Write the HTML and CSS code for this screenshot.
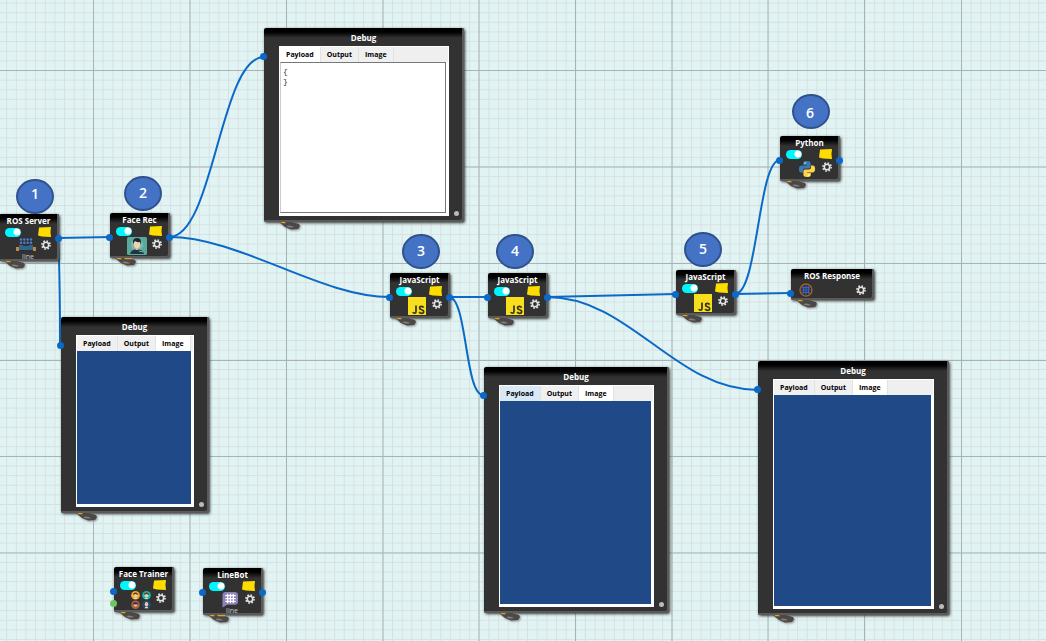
FILE: index.html
```html
<!DOCTYPE html>
<html lang="en">
<head>
<meta charset="utf-8">
<title>Flow editor</title>
<link rel="stylesheet" href="styles.css">
</head>
<body>
<svg class="defs" aria-hidden="true">
  <defs>
    <pattern id="minor" width="9.645" height="9.645" x="93" y="70" patternUnits="userSpaceOnUse">
      <path d="M0 .5H9.645M.5 0V9.645" stroke="#dcdfe2" stroke-width="1" fill="none"/>
    </pattern>
    <symbol id="gear" viewBox="0 0 10 10">
      <circle cx="5" cy="5" r="2.7" fill="none" stroke="#e4e4e4" stroke-width="1.6"/>
      <circle cx="5" cy="5" r="4.1" fill="none" stroke="#e4e4e4" stroke-width="1.6" stroke-dasharray="1.6 1.62"/>
    </symbol>
    <symbol id="foot" viewBox="0 0 22 8" preserveAspectRatio="none">
      <path d="M0 0H13L20 2L21 4L19 7L12 7.500L6 5Z" fill="#4b4846"/>
      <path d="M7 4Q11 2.500 15 5Q11 6.500 7 4Z" fill="#85817d"/>
      <path d="M1 0H6L7 1.300H3Z" fill="#e0a020"/>
    </symbol>
    <symbol id="foot-wide" viewBox="0 0 22 8" preserveAspectRatio="none">
      <path d="M0 0H13L20 2L21 4L19 7L12 7.500L6 5Z" fill="#4b4846"/>
      <path d="M7 4Q11 2.500 15 5Q11 6.500 7 4Z" fill="#85817d"/>
      <path d="M1 0H6L7 1.300H3ZM9 0H17V1.300H10Z" fill="#e0a020"/>
    </symbol>
    <symbol id="js" viewBox="0 0 18 18">
      <rect width="18" height="18" fill="#f7df1e"/>
      <path d="M8 8.500V14.500Q8 16.200 6.500 16.200Q5.300 16.200 4.900 15" fill="none" stroke="#35331c" stroke-width="1.700"/>
      <path d="M15.600 10.600Q15 9.300 13.400 9.300Q11.600 9.300 11.600 10.900Q11.600 12.200 13.600 12.700Q15.700 13.200 15.700 14.600Q15.700 16.300 13.700 16.300Q11.800 16.300 11.200 14.900" fill="none" stroke="#35331c" stroke-width="1.700"/>
    </symbol>
    <symbol id="server" viewBox="0 0 20 14">
      <g fill="#4c7ddb">
        <circle cx="5" cy="1.500" r="1.200"/><circle cx="8.300" cy="1.500" r="1.200"/><circle cx="11.600" cy="1.500" r="1.200"/><circle cx="15" cy="1.500" r="1.200"/>
        <circle cx="5" cy="4.800" r="1.200"/><circle cx="8.300" cy="4.800" r="1.200"/><circle cx="11.600" cy="4.800" r="1.200"/><circle cx="15" cy="4.800" r="1.200"/>
      </g>
      <path d="M3 7H7V8H13V7H17V12H3Z" fill="#2f6590"/>
      <path d="M0 9H3V13H0ZM17 9H20V13H17Z" fill="#c88439"/>
      <path d="M3 12H17V13H3Z" fill="#26303a"/>
    </symbol>
    <symbol id="face" viewBox="0 0 20 18">
      <rect width="20" height="18" rx="1.500" fill="#59aa9b"/>
      <circle cx="10" cy="8" r="6" fill="#76bdb0"/>
      <path d="M3 17Q4 12.500 10 12Q16 12.500 17 17Z" fill="#1e3448"/>
      <rect x="8.500" y="9" width="3" height="4" fill="#e3b88e"/>
      <ellipse cx="10" cy="7" rx="3.300" ry="4.200" fill="#f3d3ae"/>
      <path d="M6 8V4Q6.500 1 10 1Q14 1 14 5V8L13 5Q9 5.500 8 4L6.500 6Z" fill="#1b2733"/>
      <path d="M12 14L16 15" stroke="#79bdb2"/>
    </symbol>
    <symbol id="python" viewBox="0 0 20 20">
      <path d="M9.800 1C5.500 1 5.800 2.800 5.800 3.500V5.500H10V6.200H4Q1 6.200 1 10.200T4 14H5.500V11.800Q5.500 9.500 8 9.500H12Q14 9.500 14 7.500V3.500Q14 1 9.800 1Z" fill="#3b79b0"/>
      <path d="M10.200 19C14.500 19 14.200 17.200 14.200 16.500V14.500H10V13.800H16Q19 13.800 19 9.800T16 6H14.500V8.200Q14.500 10.500 12 10.500H8Q6 10.500 6 12.500V16.500Q6 19 10.200 19Z" fill="#ffd445"/>
      <circle cx="7.900" cy="3.400" r=".8" fill="#fff"/><circle cx="12.100" cy="16.600" r=".8" fill="#fff"/>
    </symbol>
    <symbol id="people" viewBox="0 0 20 18">
      <circle cx="4.500" cy="4.300" r="4.300" fill="#f5ad25"/>
      <circle cx="15.500" cy="4.300" r="4.300" fill="#18b9ad"/>
      <circle cx="4.500" cy="13.700" r="4.300" fill="#a4693e"/>
      <circle cx="15.500" cy="13.700" r="4.300" fill="#234b6b"/>
      <g fill="#f3c9a0">
        <ellipse cx="4.500" cy="4.300" rx="2" ry="2.200"/><ellipse cx="15.500" cy="4.300" rx="2" ry="2.200"/>
        <ellipse cx="4.500" cy="13.700" rx="2" ry="1.800"/><ellipse cx="15.500" cy="13.300" rx="1.700" ry="2.200"/>
      </g>
      <path d="M2 4Q2 1.500 4.500 1.500T7 4L4.500 3ZM13 4Q13 1.500 15.500 1.500T18 4L15.500 3Z" fill="#5b3725"/>
      <path d="M1.500 13.500Q2 11 4.500 11T7.500 13.500Z" fill="#5a2451"/>
      <path d="M2.500 7.700Q4.500 6 6.500 7.700ZM13.500 7.700Q15.500 6 17.500 7.700ZM13.500 17.200Q15.500 14.500 17.500 17.200Z" fill="#f6e9dc"/>
    </symbol>
    <symbol id="bot" viewBox="0 0 18 18">
      <path d="M4 1H14Q17.500 1 17.500 4.500V11Q17.500 14.500 14 14.500H6L1 17.500V5Q1 1 4 1Z" fill="#8f7fba"/>
      <path d="M6.500 3V13M9.500 3V13M12.500 3V13M4 5H15M4 8H15M4 11H15" stroke="#fff" stroke-width="1.300"/>
    </symbol>
    <symbol id="globe" viewBox="0 0 14 14">
      <circle cx="7" cy="7" r="6" fill="#2a2c33" stroke="#a95f28" stroke-width="1.400"/>
      <path d="M4.500 3V11M7 2.500V11.500M9.500 3V11M3 4.700H11M2.500 7H11.500M3 9.300H11" stroke="#3564b6" stroke-width="1.200"/>
    </symbol>
  </defs>
</svg>

<main class="canvas">
  <svg class="wires" aria-hidden="true">
    <rect width="100%" height="100%" fill="url(#minor)"/>
    <path class="major" d="M93.500 0V2000M190 0V2000M286.500 0V2000M383 0V2000M479 0V2000M575.500 0V2000M672 0V2000M768 0V2000M864.500 0V2000M961.500 0V2000M0 70.500H4000M0 167H4000M0 263.500H4000M0 360.500H4000M0 456.500H4000M0 553H4000"/>
    <g class="wire">
      <path d="M58 238L110 237"/>
      <path d="M58 238C60 270 60 310 60 346"/>
      <path d="M169 237C214 237 220 57 264 57"/>
      <path d="M169 237C240 237 320 297 390 297"/>
      <path d="M449 297H489"/>
      <path d="M449 297C467 297 465 395 483 395"/>
      <path d="M547 297L676 294"/>
      <path d="M547 297C630 297 675 390 758 390"/>
      <path d="M735 294C758 294 758 160 780 160"/>
      <path d="M735 294L791 293"/>
    </g>
  </svg>

  <section class="node ros-server">
    <h2 class="title">ROS Server</h2>
    <div class="row"><input class="toggle" type="checkbox" checked aria-label="Enable ROS Server"><span class="note"></span></div>
    <div class="row tools"><svg class="icon server"><use href="#server"/></svg><button class="gear" aria-label="Settings"><svg><use href="#gear"/></svg></button></div>
    <p class="caption">line</p>
    <i class="port out"></i><svg class="foot"><use href="#foot"/></svg>
  </section>

  <section class="node face-rec">
    <h2 class="title">Face Rec</h2>
    <div class="row"><input class="toggle" type="checkbox" checked aria-label="Enable Face Rec"><span class="note"></span></div>
    <div class="row tools"><svg class="icon"><use href="#face"/></svg><button class="gear" aria-label="Settings"><svg><use href="#gear"/></svg></button></div>
    <i class="port in"></i><i class="port out"></i><svg class="foot"><use href="#foot-wide"/></svg>
  </section>

  <section class="node js-a">
    <h2 class="title">JavaScript</h2>
    <div class="row"><input class="toggle" type="checkbox" checked aria-label="Enable JavaScript"><span class="note"></span></div>
    <div class="row tools"><svg class="icon"><use href="#js"/></svg><button class="gear" aria-label="Settings"><svg><use href="#gear"/></svg></button></div>
    <i class="port in"></i><i class="port out"></i><svg class="foot"><use href="#foot"/></svg>
  </section>

  <section class="node js-b">
    <h2 class="title">JavaScript</h2>
    <div class="row"><input class="toggle" type="checkbox" checked aria-label="Enable JavaScript"><span class="note"></span></div>
    <div class="row tools"><svg class="icon"><use href="#js"/></svg><button class="gear" aria-label="Settings"><svg><use href="#gear"/></svg></button></div>
    <i class="port in"></i><i class="port out"></i><svg class="foot"><use href="#foot"/></svg>
  </section>

  <section class="node js-c">
    <h2 class="title">JavaScript</h2>
    <div class="row"><input class="toggle" type="checkbox" checked aria-label="Enable JavaScript"><span class="note"></span></div>
    <div class="row tools"><svg class="icon"><use href="#js"/></svg><button class="gear" aria-label="Settings"><svg><use href="#gear"/></svg></button></div>
    <i class="port in"></i><i class="port out"></i><svg class="foot"><use href="#foot"/></svg>
  </section>

  <section class="node python">
    <h2 class="title">Python</h2>
    <div class="row"><input class="toggle" type="checkbox" checked aria-label="Enable Python"><span class="note"></span></div>
    <div class="row tools"><svg class="icon"><use href="#python"/></svg><button class="gear" aria-label="Settings"><svg><use href="#gear"/></svg></button></div>
    <i class="port in"></i><i class="port out"></i><svg class="foot"><use href="#foot"/></svg>
  </section>

  <section class="node face-trainer">
    <h2 class="title">Face Trainer</h2>
    <div class="row"><input class="toggle" type="checkbox" checked aria-label="Enable Face Trainer"><span class="note"></span></div>
    <div class="row tools"><svg class="icon"><use href="#people"/></svg><button class="gear" aria-label="Settings"><svg><use href="#gear"/></svg></button></div>
    <i class="port in"></i><i class="port in second"></i><svg class="foot"><use href="#foot"/></svg>
  </section>

  <section class="node linebot">
    <h2 class="title">LineBot</h2>
    <div class="row"><input class="toggle" type="checkbox" checked aria-label="Enable LineBot"><span class="note"></span></div>
    <div class="row tools"><svg class="icon bot"><use href="#bot"/></svg><button class="gear" aria-label="Settings"><svg><use href="#gear"/></svg></button></div>
    <p class="caption">line</p>
    <i class="port in"></i><i class="port out"></i><svg class="foot"><use href="#foot-wide"/></svg>
  </section>

  <section class="node response">
    <h2 class="title">ROS Response</h2>
    <div class="row"><svg class="globe"><use href="#globe"/></svg><button class="gear" aria-label="Settings"><svg><use href="#gear"/></svg></button></div>
    <i class="port in"></i><svg class="foot"><use href="#foot"/></svg>
  </section>

  <section class="node debug debug-a">
    <h2 class="title">Debug</h2>
    <div class="panel">
      <div class="tabs" role="tablist"><button class="tab active" role="tab">Payload</button><button class="tab" role="tab">Output</button><button class="tab" role="tab">Image</button></div>
      <textarea class="payload" aria-label="Payload">{
}</textarea>
    </div>
    <i class="port in"></i><i class="grip"></i><svg class="foot"><use href="#foot"/></svg>
  </section>

  <section class="node debug debug-b">
    <h2 class="title">Debug</h2>
    <div class="panel">
      <div class="tabs" role="tablist"><button class="tab" role="tab">Payload</button><button class="tab" role="tab">Output</button><button class="tab active" role="tab">Image</button></div>
      <div class="image"></div>
    </div>
    <i class="port in"></i><i class="grip"></i><svg class="foot"><use href="#foot"/></svg>
  </section>

  <section class="node debug debug-c">
    <h2 class="title">Debug</h2>
    <div class="panel">
      <div class="tabs" role="tablist"><button class="tab hover" role="tab">Payload</button><button class="tab" role="tab">Output</button><button class="tab active" role="tab">Image</button></div>
      <div class="image"></div>
    </div>
    <i class="port in"></i><i class="grip"></i><svg class="foot"><use href="#foot"/></svg>
  </section>

  <section class="node debug debug-d">
    <h2 class="title">Debug</h2>
    <div class="panel">
      <div class="tabs" role="tablist"><button class="tab" role="tab">Payload</button><button class="tab" role="tab">Output</button><button class="tab active" role="tab">Image</button></div>
      <div class="image"></div>
    </div>
    <i class="port in"></i><i class="grip"></i><svg class="foot"><use href="#foot"/></svg>
  </section>

  <span class="badge step-1">1</span>
  <span class="badge step-2">2</span>
  <span class="badge step-3">3</span>
  <span class="badge step-4">4</span>
  <span class="badge step-5">5</span>
  <span class="badge step-6">6</span>
</main>
</body>
</html>
```
FILE: styles.css
```css
* { box-sizing: border-box; }

body {
  margin: 0;
  font-family: "Open Sans", "Noto Sans", sans-serif;
}

.defs { position: absolute; width: 0; height: 0; }

.canvas {
  position: relative;
  min-height: 100vh;
  overflow: hidden;
  background: #dff4f3;
}

.wires { position: absolute; inset: 0; width: 100%; height: 100%; }
.major { stroke: #a9b3b5; stroke-width: 1; fill: none; }
.wire { stroke: #0b69c7; stroke-width: 2; fill: none; }

/* Nodes on the free canvas */
.node {
  position: absolute;
  display: flex;
  flex-direction: column;
  width: 60px;
  height: 45px;
  border-radius: 2px;
  background: linear-gradient(#000 0, #000 4px, #323232 10px);
  box-shadow: inset -2px -2px 0 #5a5a5a, 1px 1px 3px #333;
}
.ros-server { left: -1px; top: 214px; height: 47px; }
.face-rec { left: 110px; top: 213px; }
.js-a { left: 390px; top: 273px; }
.js-b { left: 488px; top: 273px; }
.js-c { left: 676px; top: 270px; }
.python { left: 780px; top: 136px; }
.face-trainer { left: 114px; top: 567px; }
.linebot { left: 203px; top: 568px; height: 47px; }
.response { left: 791px; top: 269px; width: 83px; height: 31px; }
.debug-a { left: 264px; top: 28px; width: 200px; height: 194px; }
.debug-b { left: 61px; top: 317px; width: 148px; height: 196px; }
.debug-c { left: 484px; top: 367px; width: 185px; height: 246px; }
.debug-d { left: 758px; top: 361px; width: 191px; height: 254px; }

.title {
  margin: 0;
  height: 13px;
  padding-right: 1px;
  color: #fff;
  font-size: 8px;
  line-height: 13px;
  font-weight: 700;
  text-align: center;
  white-space: nowrap;
}

.row {
  display: flex;
  justify-content: space-between;
  align-items: center;
  height: 10px;
  padding: 0 8px 0 6px;
}
.tools { height: 20px; justify-content: flex-end; align-items: flex-start; gap: 5px; }

.toggle {
  appearance: none;
  width: 16px;
  height: 9px;
  margin: 0;
  border-radius: 5px;
  background: radial-gradient(circle at 12px 4px, #fff 3px, #00f6ff 4px);
}

.note {
  width: 13px;
  height: 10px;
  background: #ffdc00;
  clip-path: polygon(8% 6%, 100% 0, 96% 50%, 100% 100%, 30% 94%, 0 85%);
}

.icon { width: 20px; height: 18px; margin-top: 1px; }
.server { height: 14px; }
.bot { height: 17px; margin-top: 0; }
.globe { width: 14px; height: 14px; margin-left: 2px; }

.gear {
  width: 10px;
  height: 10px;
  margin-top: 3px;
  padding: 0;
  border: 0;
  background: none;
}
.gear svg { display: block; width: 10px; height: 10px; }

.response .row { height: 16px; }
.response .gear { margin-top: 0; }

.caption {
  position: absolute;
  inset: auto 0 0;
  margin: 0;
  padding-right: 2px;
  color: #ccc;
  font-size: 7px;
  line-height: 8px;
  text-align: center;
}

.port {
  position: absolute;
  top: 21px;
  width: 7px;
  height: 7px;
  border-radius: 50%;
  background: #0b69c7;
}
.in { left: -4px; }
.out { right: -3px; }
.second { top: 33px; background: #6cc75f; }
.debug .port { top: 25px; }

.foot {
  position: absolute;
  top: 100%;
  left: 5px;
  width: 22px;
  height: 8px;
  filter: drop-shadow(1px 1px 1px #888);
}
.debug .foot { left: 15px; }

/* Debug windows */
.debug { padding-bottom: 6px; }
.debug .title { height: 18px; line-height: 20px; }
.panel {
  display: flex;
  flex: 1;
  flex-direction: column;
  margin: 0 15px;
  padding: 1px 3px 3px 1px;
  background: #fff;
}
.tabs {
  display: flex;
  height: 15px;
  margin-right: -2px;
  background: #efefef;
}
.tab {
  height: 15px;
  padding: 0 6px;
  border: 0;
  border-right: 1px solid #e2e2e2;
  background: #f0f0f0;
  color: #000;
  font: 700 7px/15px "Open Sans", "Noto Sans", sans-serif;
}
.tab.active { background: #fff; }
.tab.hover { background: #d8e8f7; }
.image { flex: 1; background: #204a87; }
.payload {
  flex: 1;
  width: 100%;
  margin: 0;
  padding: 4px 2px;
  border: 1px solid #777;
  border-left-color: #ccc;
  outline: 0;
  resize: none;
  color: #333;
  font: 8px/10px "Liberation Mono", monospace;
}
.grip {
  position: absolute;
  right: 5px;
  bottom: 6px;
  width: 5px;
  height: 5px;
  border-radius: 50%;
  background: #bbb;
}

/* Numbered step markers */
.badge {
  position: absolute;
  display: flex;
  align-items: center;
  justify-content: center;
  width: 38px;
  height: 35px;
  padding-bottom: 2px;
  border: 2px solid #2f528f;
  border-radius: 50%;
  background: #4472c4;
  color: #fff;
  font-size: 14px;
  line-height: 18px;
  font-weight: 600;
}
.step-1 { left: 16px; top: 179px; padding-bottom: 6px; }
.step-2 { left: 124px; top: 176px; }
.step-3 { left: 402px; top: 234px; }
.step-4 { left: 496px; top: 234px; }
.step-5 { left: 684px; top: 232px; }
.step-6 { left: 792px; top: 94px; padding: 2px 2px 0 0; }
```
